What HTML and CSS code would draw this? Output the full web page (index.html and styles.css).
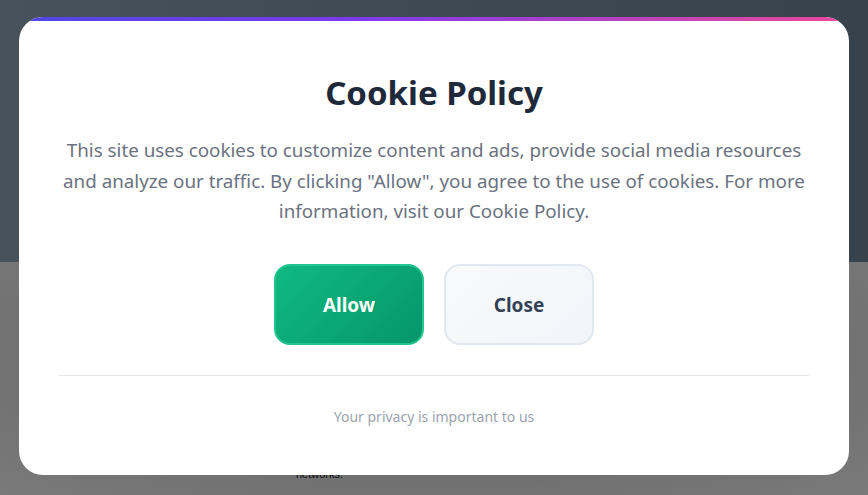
FILE: index.html
```html
<!DOCTYPE html>
<html lang="en">
<head>
<meta charset="utf-8">
<title>Cookie Policy</title>
<link rel="stylesheet" href="styles.css">
</head>
<body>
<div class="page">
  <header class="page-header"></header>
  <main class="page-body">
    <p class="page-text">networks.</p>
  </main>
</div>
<div class="overlay">
  <section class="modal">
    <h1 class="modal-title">Cookie Policy</h1>
    <p class="modal-text">This site uses cookies to customize content and ads, provide social media resources and analyze our traffic. By clicking "Allow", you agree to the use of cookies. For more information, visit our Cookie Policy.</p>
    <div class="actions">
      <button class="btn btn-allow">Allow</button>
      <button class="btn btn-close">Close</button>
    </div>
    <div class="divider"></div>
    <p class="footer-note">Your privacy is important to us</p>
  </section>
</div>
</body>
</html>
```
FILE: styles.css
```css
* { box-sizing: border-box; }
html, body {
  margin: 0;
  width: 868px;
  height: 495px;
  overflow: hidden;
}
body {
  font-family: "Noto Sans", "Open Sans", sans-serif;
  position: relative;
}
.page {
  display: flex;
  flex-direction: column;
  height: 495px;
}
.page-header {
  height: 262px;
  background: linear-gradient(90deg, #47525a 0%, #3e4a53 50%, #36434d 100%);
}
.page-body {
  flex: 1;
  background: radial-gradient(ellipse at 50% 40%, #6a6a6a 0%, #6e6e6e 55%, #7a7a7a 100%);
  padding: 205px 0 0 296px;
}
.page-text {
  margin: 0;
  font-size: 11px;
  line-height: 14px;
  color: #0a0a0a;
  font-family: "Liberation Sans", sans-serif;
}
.overlay {
  position: absolute;
  inset: 0;
  display: flex;
  justify-content: center;
  align-items: flex-start;
  padding-top: 17px;
}
.modal {
  position: relative;
  width: 830px;
  height: 458px;
  background: #ffffff;
  border-radius: 24px;
  overflow: hidden;
  padding: 54px 40px 0;
  display: flex;
  flex-direction: column;
  align-items: center;
}
.modal::before {
  content: "";
  position: absolute;
  left: 0;
  right: 0;
  top: 0;
  height: 4px;
  background: linear-gradient(90deg, #4f46e5 0%, #7c3aed 40%, #ec4899 100%);
}
.modal-title {
  margin: 0;
  font-size: 33px;
  line-height: 44px;
  font-weight: 700;
  color: #1e293b;
}
.modal-text {
  margin: 20px 0 0;
  font-size: 18.8px;
  line-height: 30.5px;
  color: #6b7280;
  text-align: center;
}
.actions {
  display: flex;
  gap: 20px;
  margin-top: 37px;
}
.btn {
  width: 150px;
  height: 81px;
  border-radius: 16px;
  font-family: inherit;
  font-size: 19px;
  font-weight: 700;
  padding-top: 3px;
}
.btn-allow {
  color: #ffffff;
  background: linear-gradient(135deg, #10b981 0%, #059669 100%);
  border: 2px solid #22c58e;
}
.btn-close {
  color: #334155;
  background: linear-gradient(135deg, #f8fafc 0%, #f1f5f9 100%);
  border: 2px solid #e2e8f0;
}
.divider {
  align-self: stretch;
  height: 1px;
  background: #e5e7eb;
  margin-top: 30px;
}
.footer-note {
  margin: 31px 0 0;
  font-size: 14px;
  line-height: 20px;
  color: #9ca3af;
}
```
